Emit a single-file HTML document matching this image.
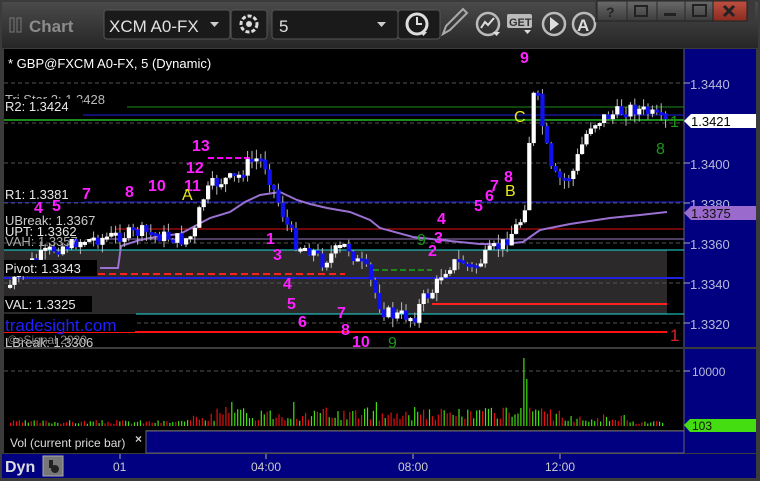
<!DOCTYPE html>
<html><head><meta charset="utf-8"><style>
html,body{margin:0;padding:0;background:#3a3a3a;}
body{width:760px;height:481px;overflow:hidden;font-family:"Liberation Sans",sans-serif;}
svg{display:block}
</style></head><body>
<svg id="s" width="760" height="481" xmlns="http://www.w3.org/2000/svg" font-family="Liberation Sans, sans-serif">
<defs>
<linearGradient id="tb" x1="0" y1="0" x2="0" y2="1"><stop offset="0" stop-color="#4a4a4a"/><stop offset="1" stop-color="#262626"/></linearGradient>
<linearGradient id="wb" x1="0" y1="0" x2="0" y2="1"><stop offset="0" stop-color="#6a6a6a"/><stop offset="1" stop-color="#3c3c3c"/></linearGradient>
<linearGradient id="xb" x1="0" y1="0" x2="0" y2="1"><stop offset="0" stop-color="#c05040"/><stop offset="1" stop-color="#8a2a20"/></linearGradient>
</defs>
<rect width="760" height="481" fill="#3b3b3b"/>
<rect x="2" y="2" width="756" height="46" fill="url(#tb)"/>
<rect x="10" y="18" width="4" height="14" fill="none" stroke="#777"/><rect x="17" y="18" width="4" height="14" fill="none" stroke="#777"/>
<text x="29" y="32" font-size="17" font-weight="bold" fill="#8c8c8c">Chart</text>
<rect x="104" y="10" width="126" height="29" rx="3" fill="#1a1a1a" stroke="#555"/>
<text x="109" y="32" font-size="17" fill="#e0e0e0">XCM A0-FX</text>
<path d="M210 22h9l-4.5 5z" fill="#ccc"/>
<rect x="231" y="10" width="36" height="29" rx="3" fill="#1a1a1a" stroke="#555"/>
<circle cx="249" cy="24" r="8" fill="none" stroke="#ddd" stroke-width="3" stroke-dasharray="4 2"/><circle cx="249" cy="24" r="3" fill="#ddd"/>
<rect x="272" y="10" width="126" height="29" rx="3" fill="#1a1a1a" stroke="#555"/>
<text x="279" y="32" font-size="17" fill="#e0e0e0">5</text>
<path d="M377 22h9l-4.5 5z" fill="#ccc"/>
<rect x="398" y="10" width="42" height="29" rx="3" fill="#1a1a1a" stroke="#555"/>
<circle cx="417" cy="24" r="10" fill="none" stroke="#ddd" stroke-width="3"/><path d="M417 17v7h5" stroke="#ddd" stroke-width="2" fill="none"/><path d="M420 32h7l-3.5 4z" fill="#ddd"/>
<path d="M443 34l3-8 17-17 4 4-17 17z" fill="none" stroke="#aaa" stroke-width="2"/>
<circle cx="488" cy="24" r="11" fill="none" stroke="#bbb" stroke-width="2.5"/><path d="M481 28l4-6 3 3 6-7" stroke="#ddd" stroke-width="2" fill="none"/><path d="M493 32h7l-3.5 4z" fill="#ddd"/>
<rect x="507" y="14" width="25" height="14" rx="2" fill="#bbb"/><text x="509" y="26" font-size="11" font-weight="bold" fill="#333">GET</text><path d="M524 30h7l-3.5 4z" fill="#ddd"/>
<circle cx="554" cy="24" r="11" fill="none" stroke="#bbb" stroke-width="2.5"/><path d="M550 17v14l9-7z" fill="#ddd"/>
<circle cx="584" cy="24" r="11" fill="none" stroke="#bbb" stroke-width="2.5"/><text x="577" y="31" font-size="17" font-weight="bold" fill="#ddd">A</text>
<rect x="595" y="0" width="160" height="22" fill="#3a3a3a"/>
<rect x="597" y="1" width="148" height="20" fill="url(#wb)" stroke="#222"/>
<rect x="713" y="1" width="34" height="20" fill="url(#xb)" stroke="#222"/>
<line x1="627" y1="1" x2="627" y2="21" stroke="#2a2a2a"/><line x1="657" y1="1" x2="657" y2="21" stroke="#2a2a2a"/><line x1="685" y1="1" x2="685" y2="21" stroke="#2a2a2a"/>
<text x="606" y="17" font-size="14" font-weight="bold" fill="#222">?</text>
<rect x="635" y="6" width="12" height="10" fill="none" stroke="#222" stroke-width="2"/>
<rect x="664" y="13" width="12" height="3" fill="#222"/>
<rect x="693" y="5" width="13" height="11" fill="none" stroke="#222" stroke-width="2"/>
<path d="M724 6l10 10M734 6l-10 10" stroke="#222" stroke-width="3"/>
<rect x="4" y="49" width="680" height="298" fill="#000"/>
<rect x="684" y="49" width="72" height="298" fill="#000080"/>
<line x1="684" y1="49" x2="684" y2="347" stroke="#666"/>
<rect x="4" y="250" width="663" height="64" fill="#2b2929"/>
<g stroke="#555" stroke-dasharray="4 3">
<line x1="4" y1="83" x2="684" y2="83"/><line x1="4" y1="123" x2="684" y2="123"/><line x1="4" y1="163" x2="684" y2="163"/><line x1="4" y1="203" x2="684" y2="203"/><line x1="4" y1="243" x2="684" y2="243"/><line x1="4" y1="283" x2="684" y2="283"/><line x1="4" y1="323" x2="684" y2="323"/>
</g>
<line x1="127" y1="107" x2="684" y2="107" stroke="#1a8a1a"/>
<line x1="83" y1="115" x2="684" y2="115" stroke="#2020e0"/>
<line x1="4" y1="120" x2="684" y2="120" stroke="#1a8a1a" stroke-width="2"/>
<line x1="4" y1="202" x2="684" y2="202" stroke="#2020e0"/>
<line x1="115" y1="229" x2="684" y2="229" stroke="#e01010"/>
<line x1="85" y1="239" x2="684" y2="239" stroke="#9a7ac0"/>
<line x1="4" y1="250" x2="684" y2="250" stroke="#20e0e0"/>
<line x1="98" y1="274" x2="345" y2="274" stroke="#ff2020" stroke-width="2" stroke-dasharray="7 4"/>
<line x1="4" y1="278" x2="684" y2="278" stroke="#2020e0" stroke-width="2"/>
<line x1="432" y1="304" x2="667" y2="304" stroke="#ff2020" stroke-width="2"/>
<line x1="136" y1="314" x2="684" y2="314" stroke="#20e0e0"/>
<line x1="4" y1="332" x2="667" y2="332" stroke="#ff1010" stroke-width="2"/>
<line x1="208" y1="158" x2="250" y2="158" stroke="#ff00ff" stroke-width="2" stroke-dasharray="6 3"/>
<line x1="373" y1="270" x2="432" y2="270" stroke="#1a8a1a" stroke-width="2" stroke-dasharray="6 3"/>
<polyline fill="none" stroke="#9a70d0" stroke-width="2" points="100,268 118,268 121,246 140,240 160,236 180,234 195,226 210,218 230,212 245,202 260,195 280,192 297,200 310,204 327,208 350,212 370,220 380,228 413,237 450,241 480,244 505,244 523,242 540,230 570,224 610,218 640,215 667,212"/>
<g id="candles"></g>
<g font-size="13" fill="#e8e8e8">
<text x="5" y="104" fill="#bbb">Tri Star 2: 1.3428</text>
<rect x="4" y="99" width="78" height="16" fill="#000"/>
<text x="5" y="111">R2: 1.3424</text>
<rect x="4" y="186" width="80" height="16" fill="#000"/>
<text x="5" y="199">R1: 1.3381</text>
<text x="5" y="225" fill="#ccc">UBreak: 1.3367</text>
<rect x="4" y="225" width="86" height="14" fill="#000"/>
<text x="5" y="236">UPT: 1.3362</text>
<text x="5" y="246" fill="#aaa">VAH: 1.3357</text>
<rect x="4" y="260" width="93" height="16" fill="#000"/>
<text x="5" y="273">Pivot: 1.3343</text>
<rect x="4" y="296" width="88" height="16" fill="#000"/>
<text x="5" y="309">VAL: 1.3325</text>
<text x="5" y="347" fill="#ccc">LBreak: 1.3306</text>
<text x="8" y="344" fill="#888" font-size="12">©eSignal 2020</text>
<rect x="4" y="315" width="131" height="17" fill="#000"/>
<text x="5" y="331" font-size="17" fill="#2020ff">tradesight.com</text>
<text x="8" y="68" fill="#fff">* GBP@FXCM A0-FX, 5 (Dynamic)</text>
</g>
<g font-size="16" font-weight="bold" fill="#ff20ff">
<text x="82" y="199">7</text><text x="125" y="197">8</text><text x="148" y="191">10</text><text x="184" y="191">11</text><text x="186" y="173">12</text><text x="192" y="151">13</text>
<text x="34" y="213">4</text><text x="52" y="211">5</text>
<text x="266" y="244">1</text><text x="273" y="260">3</text><text x="283" y="289">4</text><text x="287" y="309">5</text><text x="298" y="327">6</text><text x="337" y="318">7</text><text x="341" y="335">8</text><text x="352" y="347">10</text>
<text x="428" y="256">2</text><text x="434" y="243">3</text><text x="437" y="224">4</text><text x="474" y="211">5</text><text x="485" y="201">6</text><text x="490" y="191">7</text><text x="504" y="182">8</text><text x="520" y="63">9</text>
</g>
<g font-size="16" fill="#e8e820"><text x="182" y="200">A</text><text x="505" y="196">B</text><text x="514" y="122">C</text></g>
<g font-size="16" fill="#1a9a1a"><text x="417" y="245">9</text><text x="388" y="348">9</text><text x="656" y="154">8</text><text x="670" y="127">1</text></g>
<text x="670" y="341" font-size="17" fill="#e02020">1</text>
<g font-size="13" fill="#b8b8d8">
<line x1="684" y1="83" x2="690" y2="83" stroke="#aaa"/><text x="690" y="89">1.3440</text>
<line x1="684" y1="163" x2="690" y2="163" stroke="#aaa"/><text x="690" y="169">1.3400</text>
<line x1="684" y1="203" x2="690" y2="203" stroke="#aaa"/><text x="690" y="209">1.3380</text>
<line x1="684" y1="243" x2="690" y2="243" stroke="#aaa"/><text x="690" y="249">1.3360</text>
<line x1="684" y1="283" x2="690" y2="283" stroke="#aaa"/><text x="690" y="289">1.3340</text>
<line x1="684" y1="323" x2="690" y2="323" stroke="#aaa"/><text x="690" y="329">1.3320</text>
</g>
<path d="M684 121l7-7h65v14h-65z" fill="#fff"/><text x="691" y="126" font-size="13" fill="#000">1.3421</text>
<path d="M684 213l7-7h65v14h-65z" fill="#9a6acc"/><text x="691" y="218" font-size="13" fill="#111">1.3375</text>
<rect x="4" y="349" width="680" height="81" fill="#000"/>
<rect x="684" y="349" width="72" height="104" fill="#000080"/>
<line x1="684" y1="349" x2="684" y2="453" stroke="#666"/>
<line x1="4" y1="371" x2="684" y2="371" stroke="#555" stroke-dasharray="4 3"/>
<line x1="684" y1="371" x2="690" y2="371" stroke="#aaa"/>
<text x="692" y="376" font-size="12" fill="#b8b8d8">10000</text>
<path d="M684 425l6-6h66v13h-66z" fill="#44dd11"/><text x="692" y="430" font-size="12" fill="#111">103</text>
<g id="vol"></g>
<rect x="4" y="430" width="142" height="23" fill="#000"/>
<text x="10" y="447" font-size="12" fill="#ddd">Vol (current price bar)</text>
<text x="135" y="443" font-size="12" font-weight="bold" fill="#ccc">×</text>
<rect x="146" y="431" width="538" height="22" fill="#000080" stroke="#666"/>
<rect x="2" y="454" width="754" height="24" fill="#000080"/>
<text x="5" y="472" font-size="16" font-weight="bold" fill="#ddd">Dyn</text>
<rect x="43" y="456" width="20" height="20" fill="#777" stroke="#aaa"/><circle cx="55" cy="469" r="4" fill="#222"/><rect x="49" y="460" width="4" height="8" fill="#222"/>
<g font-size="12" fill="#ccc"><text x="113" y="471">01</text><text x="251" y="471">04:00</text><text x="398" y="471">08:00</text><text x="545" y="471">12:00</text></g>
<g stroke="#aaa"><line x1="120" y1="454" x2="120" y2="459"/><line x1="266" y1="454" x2="266" y2="459"/><line x1="413" y1="454" x2="413" y2="459"/><line x1="560" y1="454" x2="560" y2="459"/></g>
</svg>
<script>
(function(){
var pts=[[8,285],[30,262],[45,252],[60,246],[80,240],[100,238],[120,235],[140,232],[160,236],[180,240],[192,235],[200,200],[210,185],[222,180],[235,178],[245,165],[252,158],[262,162],[270,185],[285,225],[295,245],[310,250],[320,262],[335,250],[345,245],[355,262],[362,265],[372,290],[380,310],[392,316],[402,315],[412,318],[420,300],[432,290],[440,272],[450,263],[462,262],[470,268],[478,262],[490,250],[500,245],[512,230],[522,215],[526,160],[530,95],[536,100],[542,135],[550,175],[560,180],[570,175],[578,150],[588,125],[600,118],[615,113],[630,108],[645,112],[655,118],[664,123]];
function yAt(x){for(var i=1;i<pts.length;i++){if(x<=pts[i][0]){var a=pts[i-1],b=pts[i];return a[1]+(b[1]-a[1])*(x-a[0])/(b[0]-a[0]);}}return 123;}
var seed=7;function rnd(){seed=(seed*9301+49297)%233280;return seed/233280;}
var h='',prev=yAt(8);
for(var x=8;x<=664;x+=4.4){var c=yAt(x)+(rnd()-0.5)*14;var o=prev;var t=Math.min(o,c),b=Math.max(o,c);if(b-t<3)b=t+3;
var up=c<o;var wt=t-rnd()*9,wb=b+rnd()*9;
h+='<line x1="'+(x+2).toFixed(1)+'" y1="'+wt.toFixed(1)+'" x2="'+(x+2).toFixed(1)+'" y2="'+wb.toFixed(1)+'" stroke="#bbb"/>';
h+='<rect x="'+x.toFixed(1)+'" y="'+t.toFixed(1)+'" width="4.2" height="'+(b-t).toFixed(1)+'" fill="'+(up?'#fff':'#1010f0')+'"/>';prev=c;}
document.getElementById('candles').innerHTML=h;
var vh='';seed=3;
for(var x=10;x<=664;x+=2.95){var ht=2+rnd()*4;if(x>190)ht=5+rnd()*14;if(x>560)ht=4+rnd()*8;if(x>625)ht=2+rnd()*4;
if(Math.abs(x-230)<1.5||Math.abs(x-292)<1.5||Math.abs(x-376)<1.5)ht=24;
if(Math.abs(x-524)<1.5)ht=68;else if(Math.abs(x-527)<1.5)ht=47;else if(Math.abs(x-520)<1.5)ht=18;
vh+='<rect x="'+x.toFixed(1)+'" y="'+(426-ht).toFixed(1)+'" width="1.2" height="'+ht.toFixed(1)+'" fill="'+(rnd()<0.5?'#e01010':'#44dd11')+'"/>';}
document.getElementById('vol').innerHTML=vh;
})();
</script>
</body></html>
